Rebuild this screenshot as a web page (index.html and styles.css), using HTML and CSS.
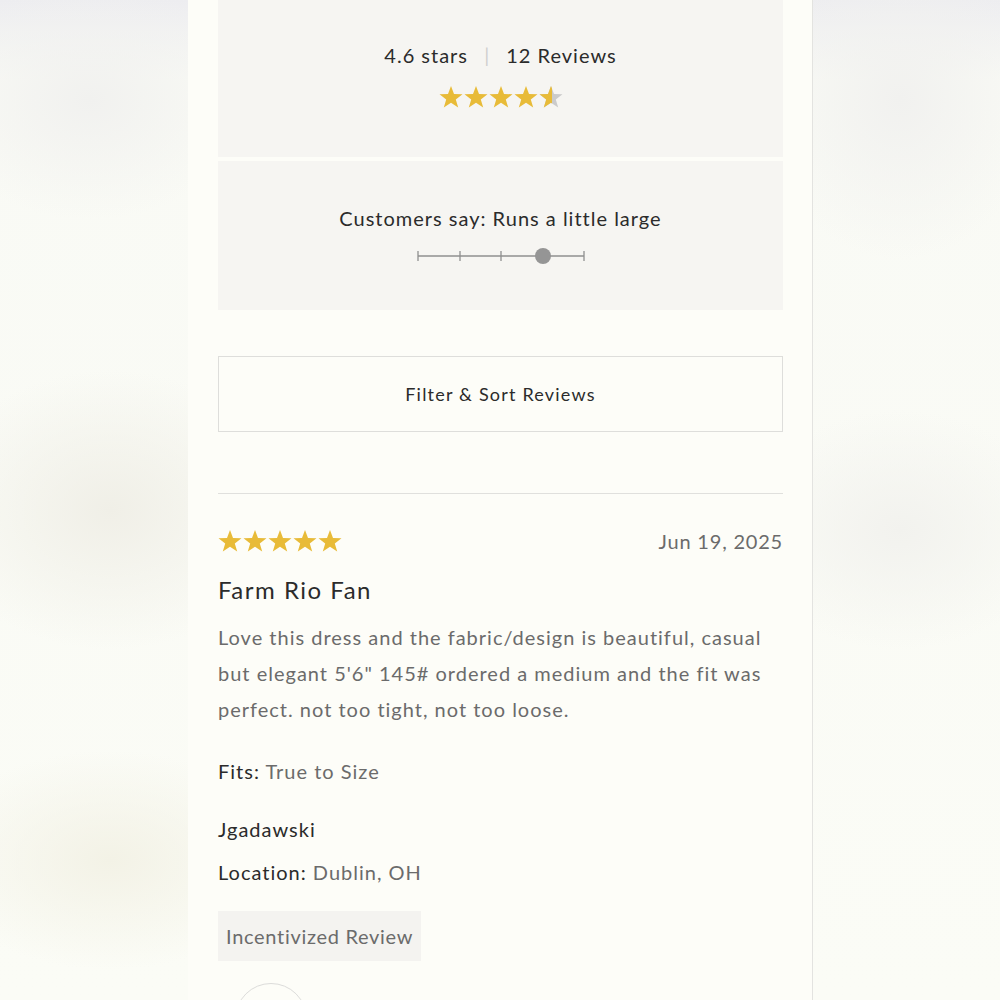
FILE: index.html
```html
<!DOCTYPE html>
<html lang="en">

<head>
    <meta charset="UTF-8">
    <meta name="viewport" content="width=device-width, initial-scale=1.0">
    <title>Reviews</title>
    <link rel="stylesheet" href="styles.css">
</head>

<body>
    <section class="page">
        <div class="column">
            <div class="summary">
                <p class="score">4.6 stars <span class="sep">|</span> 12 Reviews</p>
                <div class="stars">
                    <svg width="24" height="24" viewBox="0 0 24 24"><polygon class="on" points="12,1 15,9 23.5,9.2 16.8,14.4 19.2,22.6 12,17.8 4.8,22.6 7.2,14.4 0.5,9.2 9,9"/></svg>
                    <svg width="24" height="24" viewBox="0 0 24 24"><polygon class="on" points="12,1 15,9 23.5,9.2 16.8,14.4 19.2,22.6 12,17.8 4.8,22.6 7.2,14.4 0.5,9.2 9,9"/></svg>
                    <svg width="24" height="24" viewBox="0 0 24 24"><polygon class="on" points="12,1 15,9 23.5,9.2 16.8,14.4 19.2,22.6 12,17.8 4.8,22.6 7.2,14.4 0.5,9.2 9,9"/></svg>
                    <svg width="24" height="24" viewBox="0 0 24 24"><polygon class="on" points="12,1 15,9 23.5,9.2 16.8,14.4 19.2,22.6 12,17.8 4.8,22.6 7.2,14.4 0.5,9.2 9,9"/></svg>
                    <svg width="24" height="24" viewBox="0 0 24 24">
                        <defs><clipPath id="part"><rect x="0" y="0" width="13" height="24"/></clipPath></defs>
                        <polygon class="off" points="12,1 15,9 23.5,9.2 16.8,14.4 19.2,22.6 12,17.8 4.8,22.6 7.2,14.4 0.5,9.2 9,9"/>
                        <polygon class="on" clip-path="url(#part)" points="12,1 15,9 23.5,9.2 16.8,14.4 19.2,22.6 12,17.8 4.8,22.6 7.2,14.4 0.5,9.2 9,9"/>
                    </svg>
                </div>
            </div>

            <div class="summary fit">
                <p class="score">Customers say: Runs a little large</p>
                <svg class="scale" width="170" height="18" viewBox="0 0 170 18">
                    <line x1="1" y1="9" x2="167" y2="9"/>
                    <line x1="1" y1="4" x2="1" y2="14"/>
                    <line x1="43" y1="4" x2="43" y2="14"/>
                    <line x1="84" y1="4" x2="84" y2="14"/>
                    <line x1="167" y1="4" x2="167" y2="14"/>
                    <circle cx="126" cy="9" r="8"/>
                </svg>
            </div>

            <button class="filter">Filter &amp; Sort Reviews</button>

            <hr class="divider">

            <div class="review">
                <div class="review-head">
                    <div class="stars">
                        <svg width="24" height="24" viewBox="0 0 24 24"><polygon class="on" points="12,1 15,9 23.5,9.2 16.8,14.4 19.2,22.6 12,17.8 4.8,22.6 7.2,14.4 0.5,9.2 9,9"/></svg>
                        <svg width="24" height="24" viewBox="0 0 24 24"><polygon class="on" points="12,1 15,9 23.5,9.2 16.8,14.4 19.2,22.6 12,17.8 4.8,22.6 7.2,14.4 0.5,9.2 9,9"/></svg>
                        <svg width="24" height="24" viewBox="0 0 24 24"><polygon class="on" points="12,1 15,9 23.5,9.2 16.8,14.4 19.2,22.6 12,17.8 4.8,22.6 7.2,14.4 0.5,9.2 9,9"/></svg>
                        <svg width="24" height="24" viewBox="0 0 24 24"><polygon class="on" points="12,1 15,9 23.5,9.2 16.8,14.4 19.2,22.6 12,17.8 4.8,22.6 7.2,14.4 0.5,9.2 9,9"/></svg>
                        <svg width="24" height="24" viewBox="0 0 24 24"><polygon class="on" points="12,1 15,9 23.5,9.2 16.8,14.4 19.2,22.6 12,17.8 4.8,22.6 7.2,14.4 0.5,9.2 9,9"/></svg>
                    </div>
                    <span class="date">Jun 19, 2025</span>
                </div>

                <h2 class="title">Farm Rio Fan</h2>

                <p class="body">Love this dress and the fabric/design is beautiful, casual but elegant 5'6" 145# ordered a medium and the fit was perfect. not too tight, not too loose.</p>

                <p class="meta"><b>Fits:</b> True to Size</p>
                <p class="author">Jgadawski</p>
                <p class="meta location"><b>Location:</b> Dublin, OH</p>

                <span class="badge">Incentivized Review</span>

                <div class="avatar"></div>
            </div>
        </div>
    </section>
</body>

</html>
```

FILE: styles.css
```css
* {
    margin: 0;
    padding: 0;
    box-sizing: border-box;
}

body {
    font-family: Lato, "Noto Sans", sans-serif;
    color: #2b2b2b;
    height: 1000px;
    overflow: hidden;
    background:
        radial-gradient(ellipse 160px 120px at 90px 100px, #f1f1ef 0%, rgba(241, 241, 239, 0) 100%),
        radial-gradient(ellipse 180px 140px at 110px 510px, #f0efe7 0%, rgba(240, 239, 231, 0) 100%),
        radial-gradient(ellipse 180px 110px at 110px 860px, #f3f2e6 0%, rgba(243, 242, 230, 0) 100%),
        radial-gradient(ellipse 140px 160px at 900px 100px, #f1f1ef 0%, rgba(241, 241, 239, 0) 100%),
        radial-gradient(ellipse 160px 120px at 900px 530px, #f2f2ee 0%, rgba(242, 242, 238, 0) 100%),
        linear-gradient(#ededf0 0%, #f9faf5 8%, #fbfcf6 100%);
}

.page {
    display: flex;
    justify-content: flex-start;
}

.column {
    width: 625px;
    margin-left: 188px;
    padding: 0 29px 0 30px;
    background-color: #fdfdf8;
    border-right: 1px solid #e3e3e0;
    height: 1000px;
}

.summary {
    background-color: #f6f5f2;
    height: 157px;
    padding-top: 43px;
    display: flex;
    flex-direction: column;
    align-items: center;
}

.fit {
    margin-top: 4px;
    height: 149px;
    padding-top: 45px;
}

.score {
    font-size: 20px;
    line-height: 24px;
    letter-spacing: 1px;
    color: #2b2b2b;
}

.sep {
    color: #cfcfcf;
    margin: 0 10px;
}

.stars {
    display: flex;
    gap: 1px;
}

.summary .stars {
    margin-top: 18px;
}

.on {
    fill: #e8bb38;
}

.off {
    fill: #cbcbcb;
}

.scale {
    margin-top: 17px;
    margin-left: 2px;
}

.scale line {
    stroke: #8f8f8f;
    stroke-width: 1.3;
}

.scale circle {
    fill: #959595;
}

.filter {
    display: block;
    width: 100%;
    height: 76px;
    margin-top: 46px;
    background: transparent;
    border: 1px solid #dededb;
    font-family: inherit;
    font-size: 18px;
    letter-spacing: 1.2px;
    color: #2b2b2b;
}

.divider {
    border: none;
    border-top: 1.5px solid #e0e0dd;
    margin-top: 61px;
}

.review-head {
    display: flex;
    justify-content: space-between;
    align-items: center;
    margin-top: 35px;
}

.date {
    font-size: 20px;
    letter-spacing: 0.8px;
    color: #6b6b6b;
}

.title {
    font-size: 24px;
    font-weight: 400;
    line-height: 30px;
    letter-spacing: 1.5px;
    margin-top: 22px;
}

.body {
    font-size: 20px;
    line-height: 36px;
    letter-spacing: 1px;
    color: #6b6b6b;
    margin-top: 14px;
}

.meta,
.author {
    font-size: 20px;
    line-height: 30px;
    letter-spacing: 1px;
    color: #6b6b6b;
    margin-top: 29px;
}

.meta b {
    font-weight: 400;
    color: #2b2b2b;
}

.author {
    color: #2b2b2b;
    margin-top: 28px;
}

.location {
    margin-top: 13px;
}

.badge {
    display: inline-block;
    margin-top: 24px;
    padding: 0 8px;
    height: 50px;
    line-height: 50px;
    background-color: #f4f3f0;
    font-size: 20px;
    letter-spacing: 0.7px;
    color: #6b6b6b;
}

.avatar {
    width: 72px;
    height: 72px;
    margin: 22px 0 0 17px;
    border: 1.5px solid #dcdcda;
    border-radius: 50%;
}
```
